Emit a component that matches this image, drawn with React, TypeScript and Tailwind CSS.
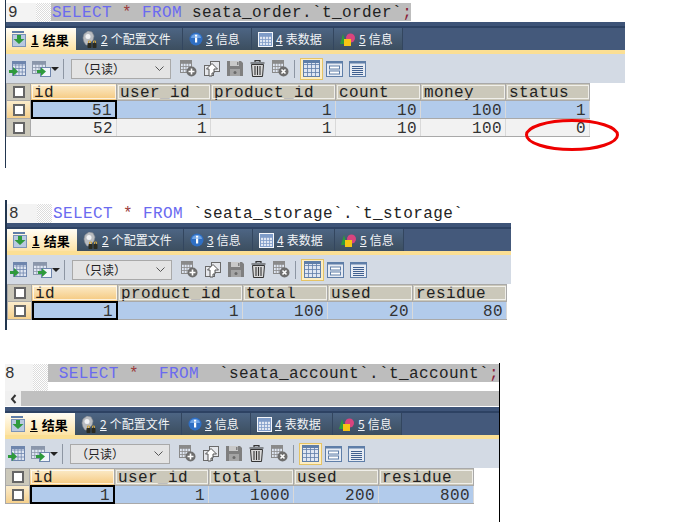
import type { ReactNode } from "react";

type Col = { name: string; width: string };

const mono = "font-['Liberation_Mono',monospace] text-[16px] tracking-[0.4px]";

function GridGlyph({ x, y, w, h, c = "#6f86ad" }: { x: number; y: number; w: number; h: number; c?: string }) {
  const lines = [];
  for (let i = 1; i < 4; i++) {
    lines.push(<path key={`v${i}`} d={`M${x + (w * i) / 4} ${y}v${h}`} stroke={c} strokeWidth="0.8" />);
    lines.push(<path key={`h${i}`} d={`M${x} ${y + (h * i) / 4}h${w}`} stroke={c} strokeWidth="0.8" />);
  }
  return (
    <g>
      <rect x={x} y={y} width={w} height={h} fill="#dfe6f2" stroke={c} />
      <rect x={x} y={y} width={w} height={2.5} fill={c} />
      {lines}
    </g>
  );
}

function ResultIcon() {
  return (
    <svg width="16" height="18" viewBox="0 0 16 18" className="shrink-0">
      <rect x="1" y="1" width="12" height="2" fill="#5f7ea8" />
      <rect x="1.5" y="4.5" width="13" height="12" fill="#b9c9e0" stroke="#7a93b8" />
      <path d="M6 5h4v4h3.500L8 14 2.500 9H6z" fill="#2e9a3c" />
    </svg>
  );
}

function ConfigIcon() {
  return (
    <svg width="16" height="17" viewBox="0 0 16 17" className="shrink-0">
      <path d="M1 7l1-4 4-3 4 1 2 4-1 4-3 3-1 2H4L2 11z" fill="#b9bcc0" stroke="#8c8f93" strokeWidth="0.6" />
      <circle cx="6" cy="5.500" r="2.500" fill="#f1f2f4" />
      <rect x="5.500" y="12" width="4" height="5" rx="0.800" fill="#2b2b20" />
      <rect x="10.500" y="12" width="4" height="5" rx="0.800" fill="#2b2b20" />
      <path d="M6.500 12V10h2v2M11.500 12V10h2v2" stroke="#c9a040" fill="none" />
    </svg>
  );
}

function InfoIcon() {
  return (
    <svg width="14" height="14" viewBox="0 0 14 14" className="shrink-0">
      <circle cx="7" cy="7" r="6.500" fill="#2f6fc4" />
      <path d="M2 6a5 4 0 0 1 10 0z" fill="#6fa4e6" />
      <rect x="6" y="5.500" width="2.200" height="5" fill="#fff" />
      <rect x="6" y="2.800" width="2.200" height="1.800" fill="#fff" />
    </svg>
  );
}

function TableIcon() {
  return (
    <svg width="15" height="15" viewBox="0 0 15 15" className="shrink-0">
      <rect x="0" y="0" width="15" height="15" fill="#f4f6fa" />
      <GridGlyph x={1.500} y={1.500} w={12} h={12} c="#7f9cc8" />
    </svg>
  );
}

function ShapesIcon() {
  return (
    <svg width="16" height="13" viewBox="0 0 16 13" className="shrink-0">
      <path d="M0 11L3 1l3 10z" fill="#2e9a3c" />
      <circle cx="10.500" cy="5" r="4.500" fill="#d9447e" />
      <rect x="4" y="6" width="7" height="7" fill="#f6c514" />
    </svg>
  );
}

function ExportIcon() {
  return (
    <svg width="18" height="18" viewBox="0 0 18 18">
      <GridGlyph x={3.500} y={1.500} w={13} h={14} />
      <path d="M0 10h4V7l5 4.500L4 16v-3H0z" fill="#2e9a3c" />
    </svg>
  );
}

function ImportIcon() {
  return (
    <svg width="19" height="18" viewBox="0 0 19 18">
      <GridGlyph x={0.500} y={1.500} w={13} h={12} c="#8b97ab" />
      <rect x="8.500" y="7.500" width="10" height="9" fill="#f2f5fa" stroke="#6f86ad" />
      <path d="M5 10h4V7.500l5 4-5 4.500v-3H5z" fill="#2e9a3c" />
    </svg>
  );
}

function AddRowIcon() {
  return (
    <svg width="17" height="17" viewBox="0 0 17 17">
      <GridGlyph x={0.500} y={0.500} w={11} h={12} c="#8a8a8a" />
      <circle cx="11.500" cy="11.500" r="5" fill="#6e6e6e" />
      <path d="M11.500 8.500v6M8.500 11.500h6" stroke="#fff" strokeWidth="1.600" />
    </svg>
  );
}

function DuplicateIcon() {
  return (
    <svg width="17" height="17" viewBox="0 0 17 17">
      <rect x="7.500" y="1.500" width="9" height="10" fill="#e6e8ec" stroke="#6a6a6a" />
      <rect x="1.500" y="5.500" width="9" height="10" fill="#e6e8ec" stroke="#6a6a6a" />
      <path d="M6 16V9H3.500L9 3.500 14.500 9H11v4H9v3z" fill="#fff" stroke="#555" strokeWidth="1" />
    </svg>
  );
}

function SaveIcon() {
  return (
    <svg width="16" height="15" viewBox="0 0 16 15">
      <path d="M0 0h14l2 2v13H0z" fill="#7f7f7f" />
      <rect x="3" y="0" width="9" height="5" fill="#c9c9c9" />
      <rect x="10" y="1" width="1.500" height="3" fill="#7f7f7f" />
      <rect x="3" y="8" width="10" height="7" fill="#a4a4a4" />
      <circle cx="8" cy="11.500" r="1.500" fill="#6a6a6a" />
    </svg>
  );
}

function TrashIcon() {
  return (
    <svg width="15" height="17" viewBox="0 0 15 17">
      <path d="M5 2V.700h5V2M.500 3h14" stroke="#333" strokeWidth="1.200" fill="none" />
      <path d="M1.500 4.500h12L12.500 16.500h-10z" fill="#d8d8d8" stroke="#333" />
      <path d="M5 6v9M7.500 6v9M10 6v9" stroke="#333" strokeWidth="1.100" />
    </svg>
  );
}

function DiscardIcon() {
  return (
    <svg width="17" height="17" viewBox="0 0 17 17">
      <GridGlyph x={0.500} y={0.500} w={11} h={12} c="#8a8a8a" />
      <circle cx="11.500" cy="11.500" r="5" fill="#6e6e6e" />
      <path d="M9.500 9.500l4 4M13.500 9.500l-4 4" stroke="#fff" strokeWidth="1.600" />
    </svg>
  );
}

function GridViewIcon() {
  return (
    <svg width="17" height="17" viewBox="0 0 17 17">
      <GridGlyph x={0.500} y={0.500} w={16} h={16} c="#5f7ea8" />
    </svg>
  );
}

function FormViewIcon() {
  return (
    <svg width="17" height="16" viewBox="0 0 17 16">
      <rect x="0.500" y="0.500" width="16" height="15" fill="#e6ebf3" stroke="#5f7ea8" />
      <rect x="0.500" y="0.500" width="16" height="2" fill="#5f7ea8" />
      <rect x="3.500" y="5" width="10" height="3" fill="#fff" stroke="#5f7ea8" />
      <rect x="3.500" y="10" width="10" height="3" fill="#fff" stroke="#5f7ea8" />
    </svg>
  );
}

function TextViewIcon() {
  return (
    <svg width="17" height="16" viewBox="0 0 17 16">
      <rect x="0.500" y="0.500" width="16" height="15" fill="#e6ebf3" stroke="#5f7ea8" />
      <rect x="0.500" y="0.500" width="16" height="2" fill="#5f7ea8" />
      <path d="M3 5.500h11M3 7.500h11M3 9.500h11M3 11.500h11M3 13.500h11" stroke="#3f5f8f" />
    </svg>
  );
}

function Tab({ icon, num, label, width, active }: { icon: ReactNode; num: string; label: string; width: string; active?: boolean }) {
  if (active) {
    return (
      <div className={`flex items-center gap-[4px] pl-[5px] bg-gradient-to-b from-[#fffdf5] to-[#fde3a5] text-black text-[13px] font-bold ${width}`}>
        {icon}
        <span className="underline">{num}</span>
        <span>{label}</span>
      </div>
    );
  }
  return (
    <div className={`flex items-center gap-[3px] pl-[6px] bg-gradient-to-b from-[#4d6584] to-[#3c4e5f] border-r border-[#33465f] text-[#f2f4f7] text-[12px] ${width}`}>
      {icon}
      <span className="underline">{num}</span>
      <span>{label}</span>
    </div>
  );
}

function Toolbar() {
  return (
    <div className="flex h-[29px] items-center bg-[#d3dae4] pl-[3px]">
      <ExportIcon />
      <div className="ml-[5px]">
        <ImportIcon />
      </div>
      <div className="mt-[1px] h-0 w-0 border-x-[4px] border-t-[4px] border-x-transparent border-t-[#222]" />
      <div className="ml-[4px] h-[20px] w-px bg-[#8d96a3]" />
      <div className="ml-[7px] flex h-[20px] w-[100px] items-center justify-between border border-[#a9a9a9] bg-[#e4e4e4] pl-[5px] pr-[6px] font-['Noto_Sans_CJK_SC',sans-serif] text-[12px] text-[#222]">
        <span>（只读）</span>
        <svg width="9" height="5" viewBox="0 0 9 5">
          <path d="M.500.500l4 4 4-4" stroke="#555" fill="none" />
        </svg>
      </div>
      <div className="ml-[9px]">
        <AddRowIcon />
      </div>
      <div className="ml-[6px]">
        <DuplicateIcon />
      </div>
      <div className="ml-[7px]">
        <SaveIcon />
      </div>
      <div className="ml-[7px]">
        <TrashIcon />
      </div>
      <div className="ml-[7px]">
        <DiscardIcon />
      </div>
      <div className="ml-[5px] h-[18px] w-px bg-[#8d96a3]" />
      <div className="ml-[5px] flex h-[22px] w-[23px] items-center justify-center border border-[#e5c365] bg-[#fdeec4]">
        <GridViewIcon />
      </div>
      <div className="ml-[3px]">
        <FormViewIcon />
      </div>
      <div className="ml-[6px]">
        <TextViewIcon />
      </div>
    </div>
  );
}

function CheckBox() {
  return <div className="h-[12px] w-[12px] border-[2px] border-[#666666] bg-white" />;
}

function ResultGrid({ columns, rows }: { columns: Col[]; rows: string[][] }) {
  return (
    <div className={`${mono} w-fit border-l border-t border-[#a9a9a9] leading-none`}>
      <div className="flex h-[17px] border-b border-[#a9a9a9]">
        <div className="flex w-[24px] items-center justify-center border-r border-[#a9a9a9] bg-[#cbc8ba]">
          <CheckBox />
        </div>
        {columns.map((col, i) => (
          <div
            key={col.name}
            className={`${col.width} flex items-center border-r border-[#a9a9a9] pl-[3px] pt-[2px] text-[#222] outline outline-1 -outline-offset-2 outline-white/70 ${
              i === 0 ? "bg-gradient-to-b from-[#fbeccb] to-[#f5c87c]" : "bg-[#cbc8ba]"
            }`}
          >
            {col.name}
          </div>
        ))}
      </div>
      {rows.map((row, r) => (
        <div key={r} className="flex h-[18px] border-b border-[#a9a9a9]">
          <div
            className={`flex w-[24px] items-center justify-center border-r border-[#a9a9a9] ${
              r === 0 ? "bg-gradient-to-b from-[#fbeccb] to-[#f5d08c]" : "bg-[#cbc8ba]"
            }`}
          >
            <CheckBox />
          </div>
          {row.map((value, c) => (
            <div
              key={c}
              className={`${columns[c].width} flex items-center justify-end pr-[3px] pt-[2px] text-[#333] ${
                r === 0 ? "bg-[#b2cbeb]" : "bg-[#f2f2f2]"
              } ${r === 0 && c === 0 ? "-my-px border-[2px] border-black pr-[2px]" : "border-r border-[#d9d9d9]"}`}
            >
              {value}
            </div>
          ))}
        </div>
      ))}
    </div>
  );
}

function Editor({ line, height, gutter, box, children }: { line: string; height: string; gutter: string; box: string; children: ReactNode }) {
  return (
    <div className={`flex ${height}`}>
      <div className={`${mono} ${gutter} bg-[#f3f3f3] leading-[20px] text-[#333]`}>{line}</div>
      <div className="w-[15px] bg-[repeating-conic-gradient(#dcdcdc_0_25%,#ffffff_0_50%)] bg-[length:2px_2px]" />
      <div className={`${mono} ${box} h-[18px] whitespace-pre leading-[20px] text-[#222]`}>{children}</div>
    </div>
  );
}

function ResultPanel({ columns, rows, scrollbar, children }: { columns: Col[]; rows: string[][]; scrollbar?: boolean; children?: ReactNode }) {
  return (
    <div className="relative">
      {scrollbar && (
        <div className="flex h-[16px] border-b border-white bg-[#c0c0c0]">
          <div className="flex w-[16px] items-center justify-center bg-[#f0f0f0]">
            <svg width="7" height="10" viewBox="0 0 7 10">
              <path d="M5.500 1L2 5l3.500 4" stroke="#333" strokeWidth="2" fill="none" />
            </svg>
          </div>
        </div>
      )}
      <div className="h-[6px] border-b-2 border-[#2d4263] bg-[#3e5478]" />
      <div className="flex h-[22px] bg-[#44597b] font-['Noto_Sans_CJK_SC',sans-serif] leading-none">
        <Tab active icon={<ResultIcon />} num="1" label="结果" width="w-[70px]" />
        <Tab icon={<ConfigIcon />} num="2" label="个配置文件" width="w-[107px]" />
        <Tab icon={<InfoIcon />} num="3" label="信息" width="w-[69px]" />
        <Tab icon={<TableIcon />} num="4" label="表数据" width="w-[82px]" />
        <Tab icon={<ShapesIcon />} num="5" label="信息" width="w-[69px]" />
      </div>
      <div className="h-[4px] bg-[#fbdf94]" />
      <Toolbar />
      <ResultGrid columns={columns} rows={rows} />
      {children}
    </div>
  );
}

function Sql({ text, spaced }: { text: string; spaced?: boolean }) {
  return (
    <>
      <span className="text-[#6a6af0]">SELECT</span>
      <span> </span>
      <span className="text-[#9c3a3a]">*</span>
      <span>{spaced ? "  " : " "}</span>
      <span className="text-[#6a6af0]">FROM</span>
      <span>{spaced ? "  " : " "}</span>
      <span>{text}</span>
    </>
  );
}

export default function App() {
  return (
    <div className="h-[526px] w-[698px] overflow-hidden bg-white">
      {/* first query */}
      <div className="ml-[5px] h-[168px] w-[620px] border-l border-[#22364f] pt-[3px]">
        <Editor line="9" height="h-[19px]" gutter="w-[30px] pl-[2px]" box="w-[360px] bg-[#bdbdbd] pl-px">
          <Sql text="seata_order.`t_order`" />
          <span className="text-[#8a1f3a]">;</span>
        </Editor>
        <ResultPanel
          columns={[
            { name: "id", width: "w-[86px]" },
            { name: "user_id", width: "w-[94px]" },
            { name: "product_id", width: "w-[125px]" },
            { name: "count", width: "w-[85px]" },
            { name: "money", width: "w-[85px]" },
            { name: "status", width: "w-[84px]" },
          ]}
          rows={[
            ["51", "1", "1", "10", "100", "1"],
            ["52", "1", "1", "10", "100", "0"],
          ]}
        >
          <svg width="96" height="36" viewBox="0 0 96 36" className="absolute left-[518px] top-[95px]">
            <ellipse cx="48" cy="18" rx="45.500" ry="14.500" fill="none" stroke="#ee0000" strokeWidth="3" />
          </svg>
        </ResultPanel>
      </div>

      {/* second query */}
      <div className="ml-[5px] mt-[32px] h-[130px] w-[506px] border-l-2 border-[#22364f] pt-[4px]">
        <Editor line="8" height="h-[19px]" gutter="w-[30px] pl-[2px]" box="pl-px">
          <Sql text="`seata_storage`.`t_storage`" />
        </Editor>
        <ResultPanel
          columns={[
            { name: "id", width: "w-[86px]" },
            { name: "product_id", width: "w-[125px]" },
            { name: "total", width: "w-[85px]" },
            { name: "used", width: "w-[85px]" },
            { name: "residue", width: "w-[94px]" },
          ]}
          rows={[["1", "1", "100", "20", "80"]]}
        />
      </div>

      {/* third query */}
      <div className="ml-[5px] mt-[33px] h-[159px] w-[495px] border-r border-black pt-px">
        <Editor line="8" height="h-[27px]" gutter="w-[29px]" box="flex-1 bg-[#bdbdbd] pl-[11px]">
          <Sql text="`seata_account`.`t_account`" spaced />
          <span className="text-[#8a1f3a]">;</span>
        </Editor>
        <ResultPanel
          scrollbar
          columns={[
            { name: "id", width: "w-[85px]" },
            { name: "user_id", width: "w-[94px]" },
            { name: "total", width: "w-[85px]" },
            { name: "used", width: "w-[85px]" },
            { name: "residue", width: "w-[95px]" },
          ]}
          rows={[["1", "1", "1000", "200", "800"]]}
        />
      </div>
    </div>
  );
}
